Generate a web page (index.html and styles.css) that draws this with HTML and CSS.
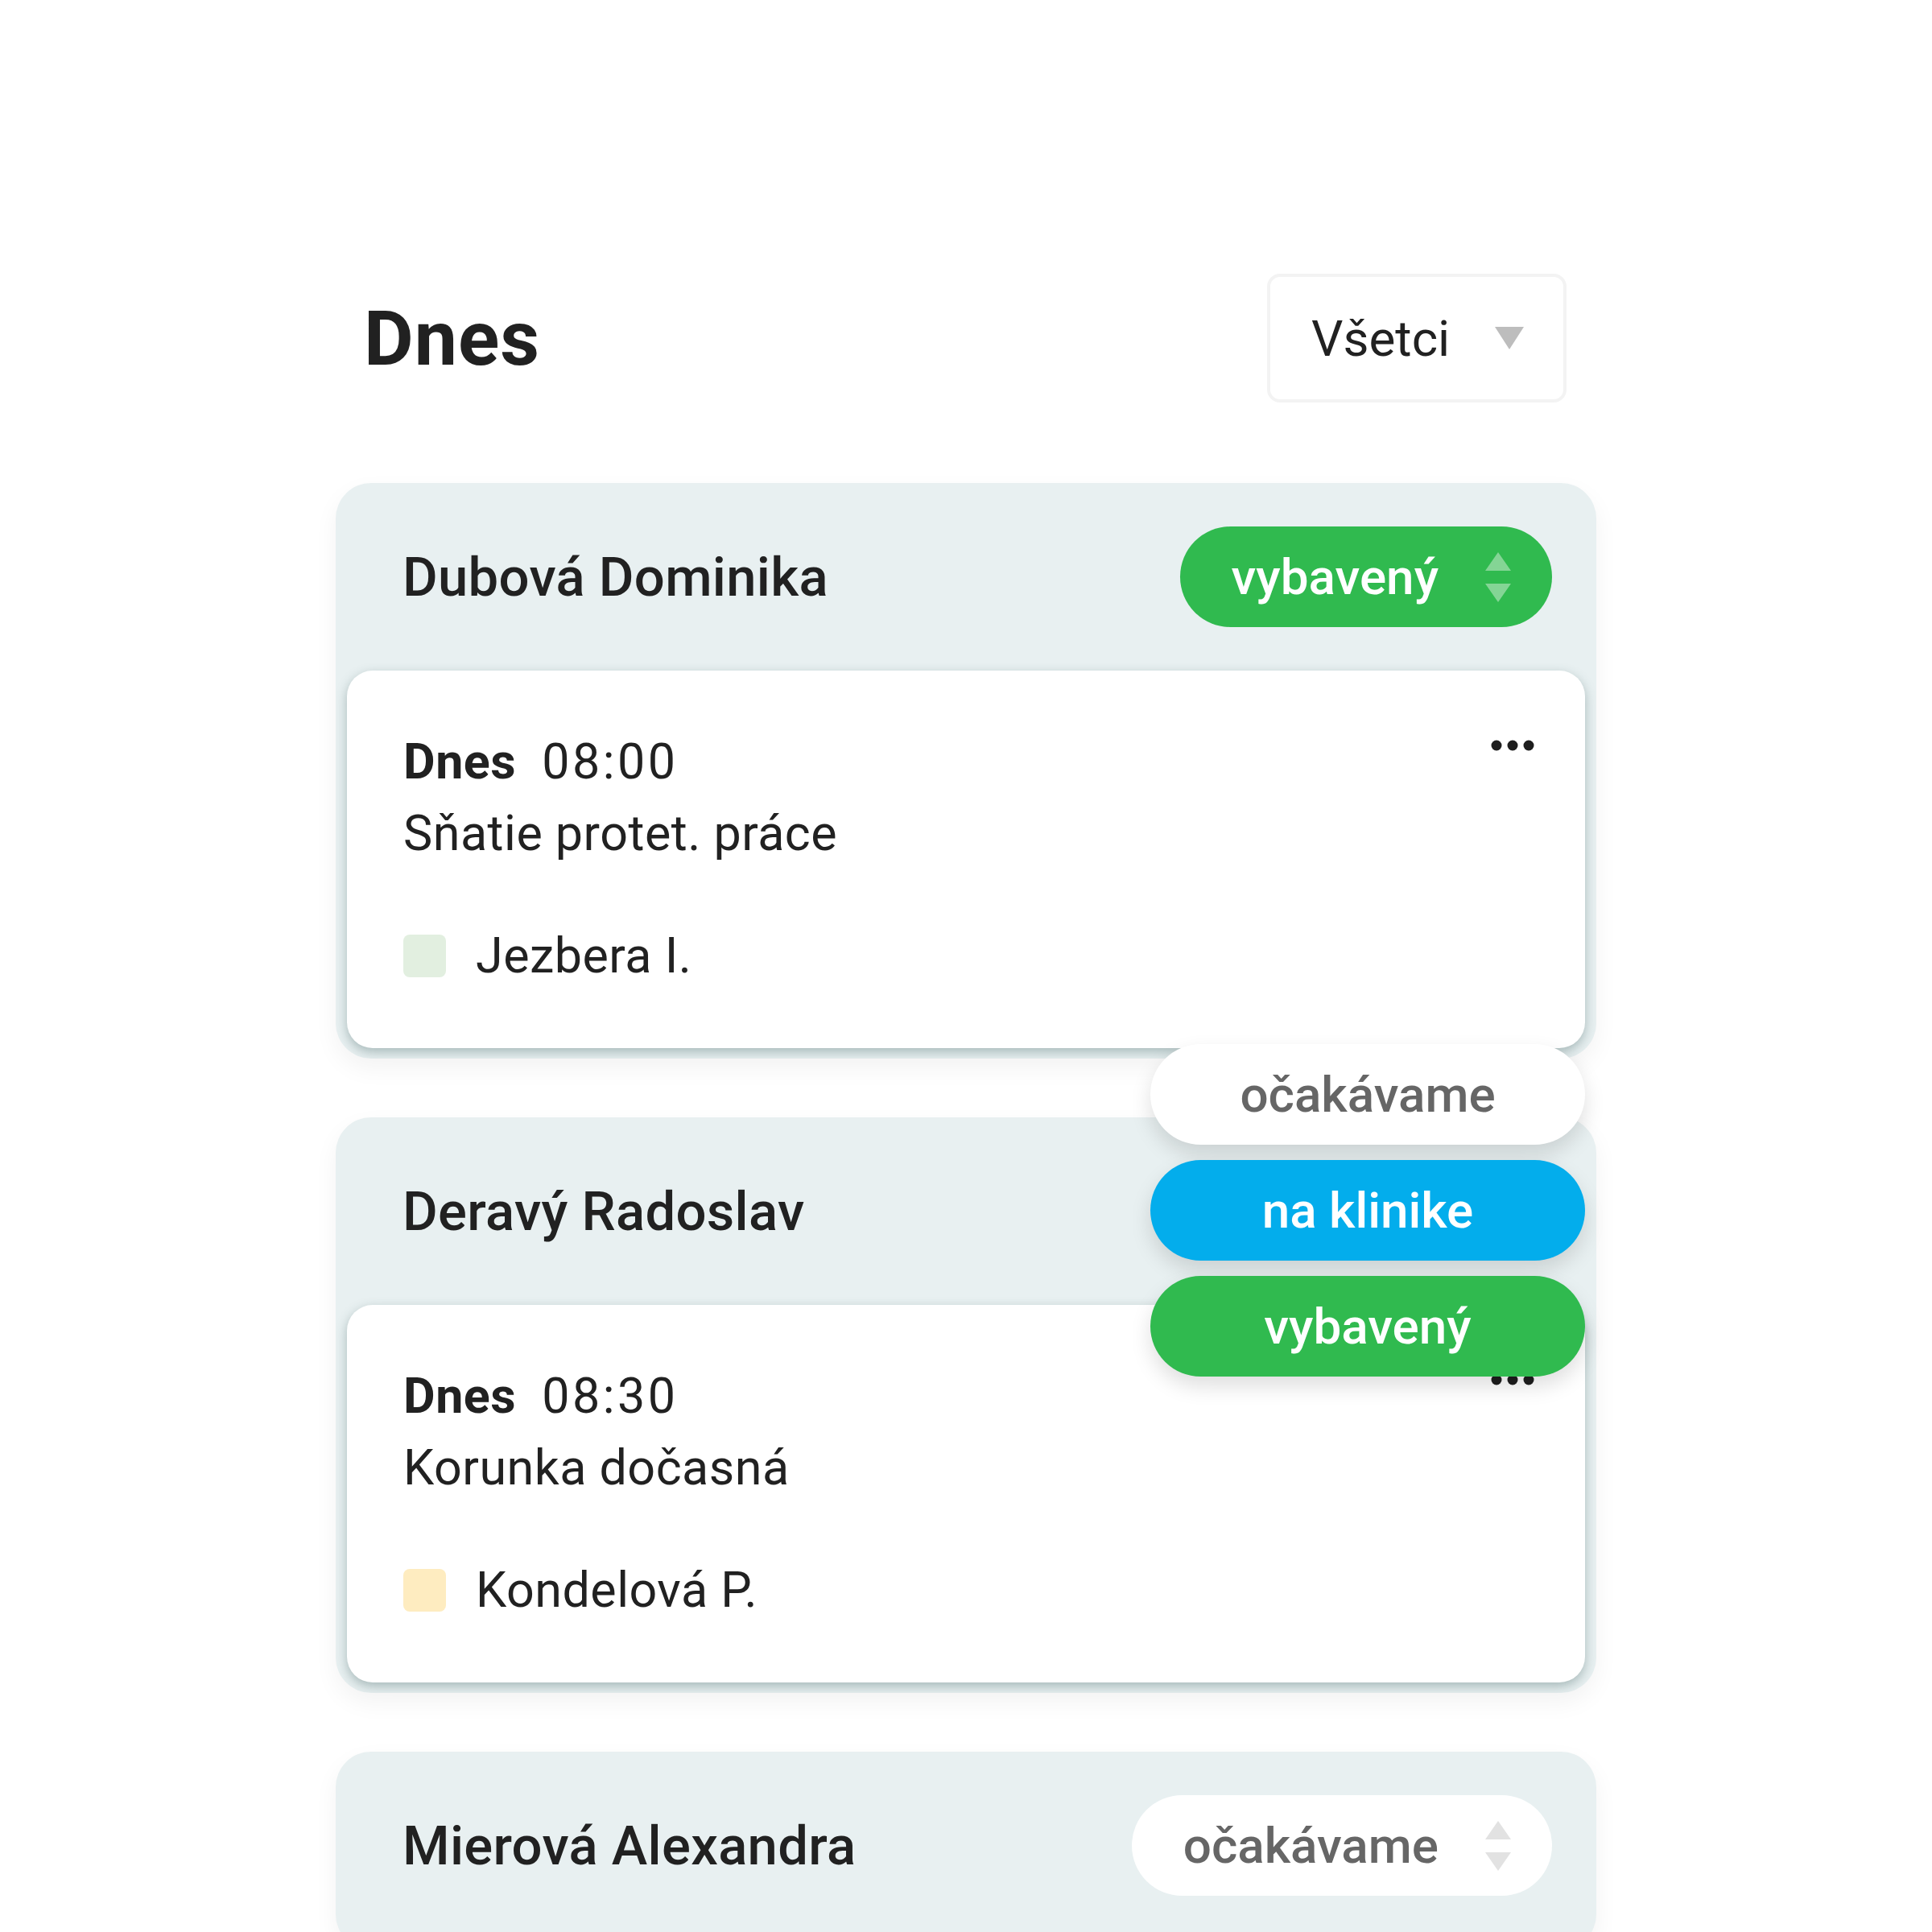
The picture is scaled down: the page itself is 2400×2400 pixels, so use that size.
FILE: index.html
```html
<!DOCTYPE html>
<html lang="sk">
<head>
    <meta charset="UTF-8">
    <meta name="viewport" content="width=device-width, initial-scale=1.0">
    <title>Dnes</title>
    <link rel="stylesheet" href="styles.css">
</head>
<body>
    <div class="page">
        <div class="page-head">
            <h1>Dnes</h1>
            <div class="filter">
                <span>Všetci</span>
                <svg width="36" height="28" viewBox="0 0 36 28"><path d="M0 0H36L18 28Z" fill="#bdbdbd"/></svg>
            </div>
        </div>

        <div class="list">
            <div class="group">
                <div class="group-head">
                    <span class="name">Dubová Dominika</span>
                    <div class="status status-done">
                        <span>vybavený</span>
                        <svg class="arrows" width="32" height="62" viewBox="0 0 32 62"><path d="M16 0L32 23H0Z M0 39H32L16 62Z" fill="currentColor"/></svg>
                    </div>
                </div>
                <div class="visit">
                    <div class="visit-top">
                        <div class="line"><strong>Dnes</strong><span class="time">08:00</span></div>
                        <svg class="dots" width="54" height="14" viewBox="0 0 54 14"><circle cx="7" cy="7" r="6.5"/><circle cx="27" cy="7" r="6.5"/><circle cx="47" cy="7" r="6.5"/></svg>
                    </div>
                    <div class="line">Sňatie protet. práce</div>
                    <div class="doctor">
                        <span class="swatch" style="background:#e2efe0"></span>
                        <span class="line">Jezbera I.</span>
                    </div>
                </div>
            </div>

            <div class="group">
                <div class="group-head">
                    <span class="name">Deravý Radoslav</span>
                </div>
                <div class="visit">
                    <div class="visit-top">
                        <div class="line"><strong>Dnes</strong><span class="time">08:30</span></div>
                        <svg class="dots" width="54" height="14" viewBox="0 0 54 14"><circle cx="7" cy="7" r="6.5"/><circle cx="27" cy="7" r="6.5"/><circle cx="47" cy="7" r="6.5"/></svg>
                    </div>
                    <div class="line">Korunka dočasná</div>
                    <div class="doctor">
                        <span class="swatch" style="background:#feecc0"></span>
                        <span class="line">Kondelová P.</span>
                    </div>
                </div>
            </div>

            <div class="group">
                <div class="group-head">
                    <span class="name">Mierová Alexandra</span>
                    <div class="status status-wait">
                        <span>očakávame</span>
                        <svg class="arrows" width="32" height="62" viewBox="0 0 32 62"><path d="M16 0L32 23H0Z M0 39H32L16 62Z" fill="currentColor"/></svg>
                    </div>
                </div>
            </div>

            <!-- otvorene menu stavu pre Deravý Radoslav -->
            <div class="status-menu">
                <div class="option option-wait">očakávame</div>
                <div class="option option-clinic">na klinike</div>
                <div class="option option-done">vybavený</div>
            </div>
        </div>
    </div>
</body>
</html>
```

FILE: styles.css
```css
body {
    margin: 0;
    background-color: #fff;
    font-family: Roboto, "Liberation Sans", sans-serif;
    color: #212121;
}
.page {
    width: 1566px;
    margin: 0 auto;
    padding-top: 340px;
}
.page-head {
    display: flex;
    justify-content: space-between;
    align-items: center;
    padding: 0 37px 0 35px;
    margin-bottom: 100px;
}
h1 {
    margin: 0;
    font-size: 95px;
    font-weight: 700;
    letter-spacing: 1px;
}
.filter {
    box-sizing: border-box;
    width: 372px;
    height: 160px;
    border: 4px solid #f3f3f3;
    border-radius: 16px;
    display: flex;
    justify-content: space-between;
    align-items: center;
    padding: 0 49px 0 51px;
    font-size: 62px;
}
.list {
    position: relative;
}
.group {
    background-color: #e8f0f1;
    border-radius: 44px;
    overflow: hidden;
    padding-bottom: 13px;
    margin-bottom: 73px;
    box-shadow: 0 12px 30px rgba(0,0,0,0.05);
}
.group-head {
    height: 233px;
    display: flex;
    justify-content: space-between;
    align-items: center;
    padding: 0 55px 0 83px;
}
.name {
    font-size: 67px;
    font-weight: 500;
    letter-spacing: 0.3px;
}
.status {
    height: 125px;
    border-radius: 63px;
    display: flex;
    align-items: center;
    gap: 58px;
    padding: 0 51px 0 64px;
    font-size: 62px;
    font-weight: 500;
}
.status-done {
    background-color: #30ba4f;
    color: #fff;
}
.status-done .arrows {
    color: #84d595;
}
.status-wait {
    background-color: #fff;
    color: #666;
}
.status-wait .arrows {
    color: #e2e2e2;
}
.visit {
    margin: 0 14px;
    background-color: #fff;
    border-radius: 32px;
    padding: 69px 63px 70px 70px;
    box-shadow: 0 5px 14px rgba(60,95,95,0.38);
}
.visit-top {
    display: flex;
    justify-content: space-between;
    align-items: flex-start;
}
.dots {
    margin-top: 17px;
    fill: #1e1e1e;
}
.line {
    font-size: 61px;
    line-height: 89px;
    letter-spacing: 0.5px;
}
.line strong {
    font-weight: 700;
}
.time {
    margin-left: 32px;
    letter-spacing: 3.5px;
}
.doctor {
    display: flex;
    align-items: center;
    gap: 37px;
    margin-top: 63px;
}
.swatch {
    width: 53px;
    height: 53px;
    border-radius: 8px;
}
.status-menu {
    position: absolute;
    top: 697px;
    right: 14px;
    width: 540px;
    display: flex;
    flex-direction: column;
    gap: 19px;
}
.option {
    height: 125px;
    border-radius: 63px;
    display: flex;
    justify-content: center;
    align-items: center;
    font-size: 62px;
    font-weight: 500;
    box-shadow: 0 12px 26px rgba(0,0,0,0.13);
}
.option-wait {
    background-color: #fff;
    color: #666;
}
.option-clinic {
    background-color: #03adec;
    color: #fff;
}
.option-done {
    background-color: #30ba4f;
    color: #fff;
}
```
